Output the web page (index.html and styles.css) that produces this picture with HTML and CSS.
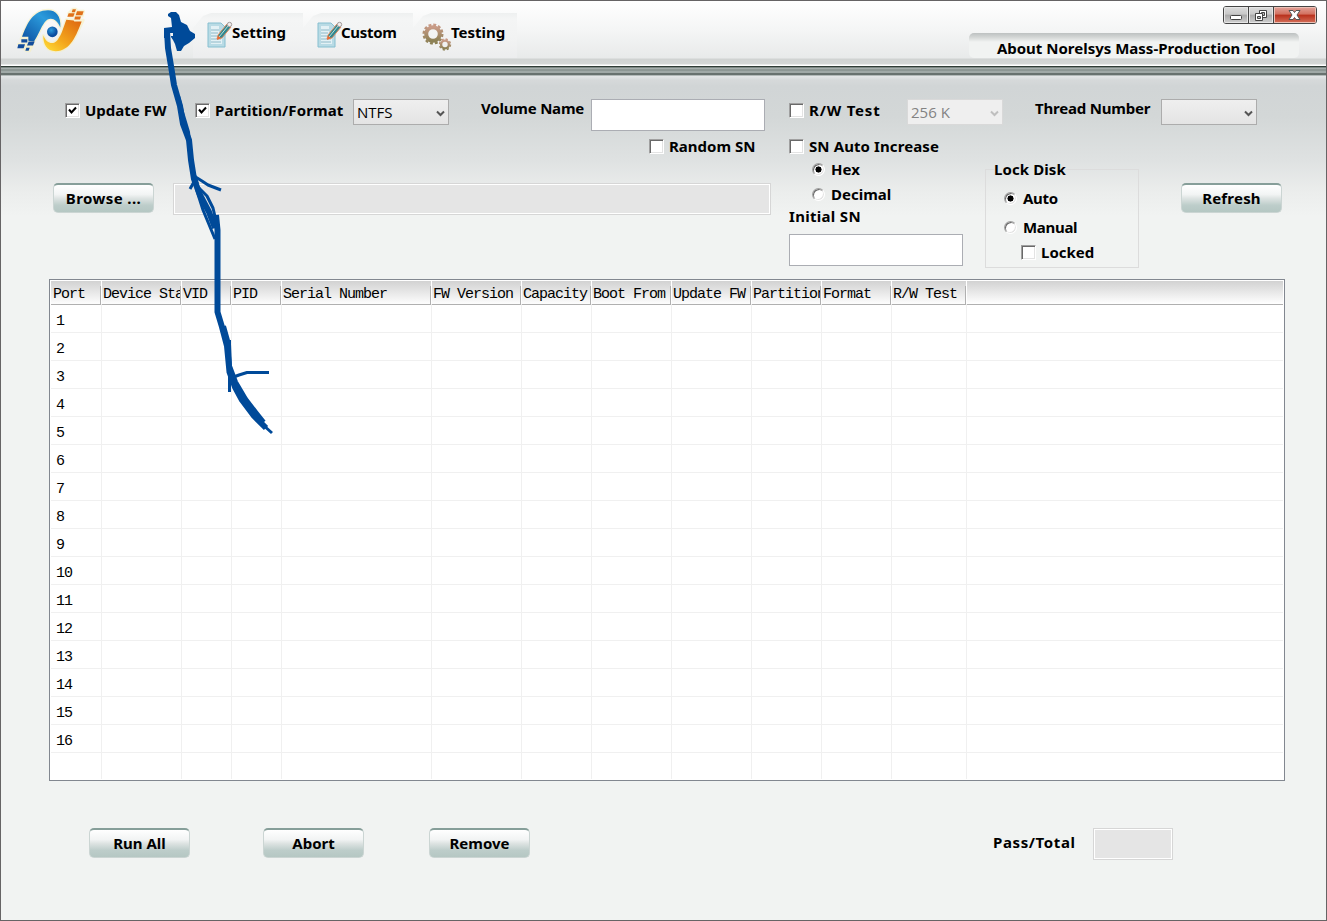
FILE: index.html
```html
<!DOCTYPE html>
<html lang="en">
<head>
  <meta charset="UTF-8" />
  <title>Norelsys Mass-Production Tool</title>
  <link rel="stylesheet" href="styles.css">
</head>
<body>
<div class="window">

  <!-- Header -->
  <div class="header">
    <svg class="logo" viewBox="38 18 240 152">
      <defs>
        <linearGradient id="blue" x1="0" y1="1" x2="1" y2="0">
          <stop offset="0" stop-color="#0c4fa0" /><stop offset="0.65" stop-color="#2b9bdc" /><stop offset="1" stop-color="#1473bd" />
        </linearGradient>
        <linearGradient id="orange" x1="0" y1="1" x2="1" y2="0">
          <stop offset="0" stop-color="#ffe03a" /><stop offset="0.4" stop-color="#f4a81c" /><stop offset="1" stop-color="#dd6410" />
        </linearGradient>
        <radialGradient id="ball" cx="0.4" cy="0.35">
          <stop offset="0" stop-color="#2b9bdc" /><stop offset="1" stop-color="#0c4fa0" />
        </radialGradient>
      </defs>
      <g stroke="#f8f0bd" stroke-width="8" stroke-linejoin="round" class="glow">
        <path d="M62 117C80 70 98 30 143 30C168 30 182 48 180 82C169 54 147 48 133 66C121 82 114 104 101 126L80 123L83 116Z" />
        <path d="M198 58L249 60C229 103 211 153 166 153C139 153 128 132 129 106C139 131 158 135 171 120C185 103 190 79 198 58Z" />
        <path d="M54 132h44l-10 20h-10zM205 39l12 -12h10l3 6h20l-4 15h-40z" />
      </g>
      <path fill="url(#blue)" d="M65 110C80 70 98 30 143 30C168 30 182 48 180 82C169 54 147 48 133 66C121 82 114 104 101 124L84 122V110Z" />
      <path fill="url(#orange)" d="M198 59L220 61L222 64L244 64C229 103 211 153 166 153C139 153 128 132 129 106C139 131 158 135 171 120C185 103 190 79 198 59Z" />
      <circle cx="156" cy="95" r="16" fill="url(#ball)" />
      <path fill="#134d9c" d="M63 117h18v10h-18zM85 124h18l-5 12h-18zM54 132h20l-4 12h-19zM78 143h10l-3 9h-10z" />
      <path fill="#e0711a" d="M217 27h10l-3 9h-10zM230 33h20l-4 12h-20zM205 39h18l-4 11h-18zM224 49h18l-3 9h-17z" />
    </svg>
    <div class="tabs">
      <div class="tab">
        <svg class="tab-icon" viewBox="0 0 26 28">
          <path d="M1 2H14L18 6V26H1Z" fill="#b9dbe5" stroke="#86bfd0" />
          <path d="M4 5H12V12H15V23H4Z" fill="#e3f1f5" />
          <path d="M4 9H12M4 12H11M4 15H10M4 18H14M4 21H14" stroke="#8eb9c8" />
          <path d="M10 18L11 14L20 3L24 6L15 17Z" fill="#31888f" stroke="#e08b60" />
          <path d="M12 16L21 5" stroke="#b9e0dc" />
          <path d="M10 19L11 15L14 17Z" fill="#f06a30" />
          <circle cx="22.5" cy="3.5" r="2.2" fill="#eee" stroke="#a39a9a" />
        </svg>
        <span>Setting</span>
      </div>
      <div class="tab">
        <svg class="tab-icon" viewBox="0 0 26 28">
          <path d="M1 2H14L18 6V26H1Z" fill="#b9dbe5" stroke="#86bfd0" />
          <path d="M4 5H12V12H15V23H4Z" fill="#e3f1f5" />
          <path d="M4 9H12M4 12H11M4 15H10M4 18H14M4 21H14" stroke="#8eb9c8" />
          <path d="M10 18L11 14L20 3L24 6L15 17Z" fill="#31888f" stroke="#e08b60" />
          <path d="M12 16L21 5" stroke="#b9e0dc" />
          <path d="M10 19L11 15L14 17Z" fill="#f06a30" />
          <circle cx="22.5" cy="3.5" r="2.2" fill="#eee" stroke="#a39a9a" />
        </svg>
        <span class="t-custom">Custom</span>
      </div>
      <div class="tab tab-testing">
        <svg class="tab-icon gear-icon" viewBox="0 0 30 28">
          <defs>
            <linearGradient id="gear" x1="0" y1="0" x2="0" y2="1">
              <stop offset="0" stop-color="#c99b87" /><stop offset="1" stop-color="#8c8155" />
            </linearGradient>
          </defs>
          <g fill="none" stroke="url(#gear)">
            <circle cx="11" cy="11" r="6.8" stroke-width="4" />
            <circle cx="11" cy="11" r="9.3" stroke-width="2.4" stroke-dasharray="2.9 1.97" />
            <circle cx="23" cy="21.5" r="3.9" stroke-width="2.4" />
            <circle cx="23" cy="21.5" r="5.4" stroke-width="1.6" stroke-dasharray="2.2 2.04" />
          </g>
        </svg>
        <span>Testing</span>
      </div>
    </div>
    <div class="header-right">
      <div class="win-buttons">
        <button class="win-btn"><svg viewBox="0 0 24 16"><rect x="6.500" y="8.500" width="11" height="4" rx="1" fill="#fff" stroke="#444" /></svg></button>
        <button class="win-btn"><svg viewBox="0 0 24 16">
          <path d="M10.500 3.500h7v7h-7z" fill="#fff" stroke="#444" />
          <path d="M12.500 5.500h3v3h-3z" fill="#bbb" stroke="#444" />
          <path d="M6.500 6.500h7v7h-7z" fill="#fff" stroke="#444" />
          <path d="M8.500 9.500h3v2h-3z" fill="#bbb" stroke="#444" />
        </svg></button>
        <button class="win-btn win-close"><svg viewBox="0 0 42 16">
          <path d="M15 3.500h4l1.500 2l1.500 -2h4l-3 4.500l3 4.500h-4l-1.500 -2l-1.500 2h-4l3 -4.500z" fill="#fff" stroke="#555" />
        </svg></button>
      </div>
      <div class="about">About Norelsys Mass-Production Tool</div>
    </div>
  </div>
  <div class="stripe"></div>

  <!-- Settings -->
  <div class="settings">
    <div class="settings-left">
      <div class="row-left">
        <label class="check"><input type="checkbox" checked><span>Update FW</span></label>
        <label class="check"><input type="checkbox" checked><span class="t-partition">Partition/Format</span></label>
        <div class="select">NTFS<svg viewBox="0 0 9 7"><path d="M1 1.500L4.500 5L8 1.500" /></svg></div>
        <span class="caption">Volume Name</span>
        <input type="text" class="text-box">
      </div>
      <label class="check random"><input type="checkbox"><span>Random SN</span></label>
      <div class="browse-row">
        <button class="btn t-browse">Browse ...</button>
        <div class="readonly path"></div>
      </div>
    </div>

    <div class="settings-right">
      <div class="row-right">
        <label class="check"><input type="checkbox"><span class="t-rw">R/W Test</span></label>
        <div class="select disabled">256 K<svg viewBox="0 0 9 7"><path d="M1 1.500L4.500 5L8 1.500" /></svg></div>
        <span class="caption">Thread Number</span>
        <div class="select"><svg viewBox="0 0 9 7"><path d="M1 1.500L4.500 5L8 1.500" /></svg></div>
      </div>
      <div class="sn-row">
        <div class="serial">
          <label class="check"><input type="checkbox"><span class="t-partition">SN Auto Increase</span></label>
          <label class="check radio hex"><input type="radio" name="base" checked><span>Hex</span></label>
          <label class="check radio decimal"><input type="radio" name="base"><span>Decimal</span></label>
          <div class="initial">Initial SN</div>
          <input type="text" class="text-box">
        </div>
        <fieldset class="lock">
          <legend>Lock Disk</legend>
          <label class="check"><input type="radio" name="lock" checked><span class="t-lock">Auto</span></label>
          <label class="check manual"><input type="radio" name="lock"><span class="t-lock">Manual</span></label>
          <label class="check locked"><input type="checkbox"><span>Locked</span></label>
        </fieldset>
        <button class="btn refresh">Refresh</button>
      </div>
    </div>
  </div>

  <!-- Ports -->
  <div class="list">
    <table>
      <colgroup>
        <col class="w51"><col class="w80"><col class="w50"><col class="w50"><col class="w150"><col class="w90">
        <col class="w70"><col class="w80"><col class="w80"><col class="w70"><col class="w70"><col class="w75"><col>
      </colgroup>
      <thead>
        <tr>
          <th>Port</th>
          <th>Device Status</th>
          <th>VID</th>
          <th>PID</th>
          <th>Serial Number</th>
          <th>FW Version</th>
          <th>Capacity</th>
          <th>Boot From</th>
          <th>Update FW</th>
          <th>Partition</th>
          <th>Format</th>
          <th>R/W Test</th>
          <th></th>
        </tr>
      </thead>
      <tbody id="portRows"></tbody>
    </table>
  </div>

  <!-- Actions -->
  <div class="footer">
    <button class="btn">Run All</button>
    <button class="btn abort">Abort</button>
    <button class="btn remove">Remove</button>
    <span class="pass">Pass/Total</span>
    <div class="readonly total"></div>
  </div>

  <!-- Pen marks -->
  <svg class="pen" viewBox="0 0 1327 921">
    <path class="fill" d="M168 14L171 12H176L179 15L181 22L187 25L190 31L195 34V38L189 43L184 46L181 51H177L175 44L173 40L171 37V36H173V33H168V38H164V28L172 27L171 18L168 16Z" />
    <path class="thick" d="M167 31L168 48L171 66L174 85L180 106L183 124L189 140L191 160L194 179L200 195L209 212L215 228" />
    <path class="thick" d="M216 215L217.500 230V260V312L222 327L227 346L229.500 372L235 387L242 400L254 416L266 428" />
    <path class="mid" d="M178 96L182 112L188 132L190 152L193 172L197 184M224 326L229 344L230 366L236 382L246 399L256 412L264 422" />
    <path d="M192 168L195 180L190 189M194 176L202 181L208 185L221 190M199 188L207 196L213 208L217 225M196 188L203 210L215 239M262 424L272 433M229.500 340V392M231 378L239 375L247 372.500H269" />
  </svg>
</div>

<script>
  const body = document.getElementById('portRows');
  for (let i = 1; i <= 17; i++) {
    const row = document.createElement('tr');
    row.innerHTML = `<td>${i <= 16 ? i : ''}</td>` + '<td></td>'.repeat(12);
    body.appendChild(row);
  }
</script>
</body>
</html>
```
FILE: styles.css
```css
* {
  box-sizing: border-box;
}
body {
  margin: 0;
  font-family: "Noto Sans", sans-serif;
  font-size: 15px;
  font-weight: 700;
  line-height: 20px;
  color: #000;
}
button, input {
  font: inherit;
  margin: 0;
}
.window {
  position: relative;
  width: 1327px;
  height: 921px;
  overflow: hidden;
  border: 1px solid #666465;
  background: #f1f3f2;
}

/* Header */
.header {
  display: flex;
  height: 65px;
  background: linear-gradient(#fff 0, #f4f5f5 30px, #e8eaea 57px, #d0d3d2 58px, #d3d6d5 63px, #fff 64px);
}
.logo {
  width: 80px;
  height: 51px;
  margin: 5px 0 0 12px;
}
.glow {
  fill: #f8f0bd;
  opacity: 0.6;
}
.tabs {
  display: flex;
  margin: 12px 0 0 100px;
  height: 45px;
}
.tab {
  display: flex;
  width: 110px;
  padding: 8px 0 0 14px;
  background: linear-gradient(#eef0f0, #f4f5f5 6px, #f2f3f3 25px, #ecedee);
  clip-path: polygon(0 15px, 10px 3px, 18px 0, 100% 0, 100% 100%, 0 100%);
}
.tab-icon {
  width: 26px;
  height: 28px;
  flex: none;
}
.tab span {
  margin: 1px 0 0 -1px;
}
.tab .t-custom {
  margin-left: -2px;
  letter-spacing: -0.3px;
}
.tab-testing {
  width: 104px;
  padding-left: 9px;
}
.gear-icon {
  width: 30px;
  margin-top: 2px;
}
.tab-testing span {
  margin-left: -1px;
}
.header-right {
  display: flex;
  flex-direction: column;
  align-items: flex-end;
  margin-left: auto;
  width: 350px;
}
.win-buttons {
  display: flex;
  width: 94px;
  height: 18px;
  margin: 5px 9px 0 0;
  border: 1px solid #444;
  border-radius: 3px;
  overflow: hidden;
}
.win-btn {
  flex: 0 0 25px;
  height: 16px;
  padding: 0;
  border: 0;
  border-right: 1px solid #444;
  background: linear-gradient(#dcdcdc, #c8c8c8 45%, #a9a9a9 50%, #cfcfcf);
  box-shadow: inset 0 0 0 1px #e6e6e6;
}
.win-btn svg {
  display: block;
  width: 100%;
  height: 16px;
}
.win-close {
  flex: 1;
  border-right: 0;
  background: linear-gradient(#e2a198, #d2705f 45%, #b8301c 50%, #d4705a);
  box-shadow: inset 0 0 0 1px #ecc0b5;
}
.about {
  width: 330px;
  height: 25px;
  margin: 9px 27px 0 0;
  padding: 5px 0 0 4px;
  border-radius: 5px;
  background: linear-gradient(#bdc1c1, #d2d5d4 4px, #f1f3f2 9px);
  text-align: center;
  white-space: nowrap;
}
.stripe {
  height: 10px;
  background: linear-gradient(#2f3c36 0 1px, #7d8884 1px 2px, #a5aeac 2px 3px, #8d9794 3px 5px, #a0a9a7 5px 7px, #68726f 7px 9px, #b3bab9 9px);
}

/* Settings */
.settings {
  display: flex;
  height: 203px;
  padding-top: 23px;
  background: linear-gradient(#e5e7e8, #d6d9da 4px, #d1d5d6 10px, #d3d7d7 40px, #dfe2e2 85px, #ebedec 115px, #f1f3f2 140px);
}
.settings-left {
  width: 788px;
}
.row-left {
  display: grid;
  grid-template-columns: 130px 158px 128px 110px 174px;
  align-items: start;
  height: 32px;
  margin-left: 64px;
}
.check {
  display: flex;
  align-items: center;
  height: 20px;
  white-space: nowrap;
}
.row-left .check, .row-right .check {
  margin-top: 1px;
}
.check input {
  appearance: none;
  flex: none;
  width: 15px;
  height: 15px;
  margin-right: 5px;
  border: 1px solid;
  border-color: #a0a0a0 #fff #fff #a0a0a0;
  background: #fff no-repeat center;
  box-shadow: inset 1px 1px #696969, inset -1px -1px #e3e3e3;
}
.check input[type="checkbox"]:checked {
  background-image: url("data:image/svg+xml,%3Csvg xmlns='http://www.w3.org/2000/svg' width='9' height='9'%3E%3Cpath d='M1 3.500L3.500 6.500L8 1.500' fill='none' stroke='black' stroke-width='2'/%3E%3C/svg%3E");
}
.check input[type="radio"] {
  width: 13px;
  height: 13px;
  margin-right: 6px;
  border-radius: 50%;
}
.check input[type="radio"]:checked {
  background-image: radial-gradient(#000 2.800px, transparent 3.300px);
}
.t-partition {
  letter-spacing: 0.1px;
}
.t-rw {
  letter-spacing: 0.8px;
}
.t-lock {
  letter-spacing: -0.3px;
}
.t-browse {
  letter-spacing: 0.4px;
}
.caption {
  margin-top: -1px;
  letter-spacing: -0.2px;
  white-space: nowrap;
}
.select {
  display: flex;
  align-items: center;
  justify-content: space-between;
  width: 96px;
  height: 26px;
  padding: 0 3px;
  border: 1px solid #acacac;
  background: linear-gradient(#efefef, #e4e4e4);
  font-family: "Open Sans", sans-serif;
  font-weight: 400;
}
.select svg {
  width: 9px;
  height: 7px;
  margin: 2px 0 0 auto;
  fill: none;
  stroke: #555;
  stroke-width: 2;
}
.disabled {
  border-color: #d9d9d9;
  background: #efefef;
  color: #838383;
}
.disabled svg {
  stroke: #bfbfbf;
}
.text-box {
  display: block;
  width: 174px;
  height: 32px;
  border: 1px solid #abadb3;
  background: #fff;
}
.random {
  margin: 5px 0 0 648px;
}
.browse-row {
  display: flex;
  gap: 19px;
  margin: 27px 0 0 52px;
}
.btn {
  width: 101px;
  height: 30px;
  padding: 0;
  border: 1px solid #cbd5d3;
  border-top: 2px solid #869e99;
  border-radius: 5px;
  background: linear-gradient(#fff, #f2f4f4 35%, #dde3e2 50%, #bdcdca 75%, #b5c7c3);
  line-height: 24px;
  padding-bottom: 2px;
}
.readonly {
  height: 32px;
  border: 1px solid #d6d6d6;
  background: #e5e5e5;
  box-shadow: inset 0 0 0 1px #fff;
}
.path {
  width: 598px;
}
.row-right {
  display: grid;
  grid-template-columns: 118px 128px 126px 96px;
  align-items: start;
  height: 37px;
}
.sn-row {
  display: flex;
  align-items: flex-start;
}
.serial {
  width: 196px;
}
.radio {
  margin-left: 23px;
}
.hex {
  margin-top: 3px;
}
.decimal {
  margin-top: 5px;
}
.initial {
  margin: 2px 0 8px;
  letter-spacing: 0.3px;
}
.lock {
  width: 154px;
  height: 109px;
  margin: 23px 42px 0 0;
  padding: 9px 0 0 18px;
  border: 1px solid #dcdcdc;
}
.lock legend {
  padding: 0;
  margin-left: -10px;
  letter-spacing: 0.1px;
}
.manual {
  margin-top: 9px;
}
.locked {
  margin: 5px 0 0 17px;
}
.refresh {
  margin-top: 47px;
  letter-spacing: 0.2px;
}

/* Port list */
.list {
  width: 1236px;
  height: 502px;
  margin-left: 48px;
  padding: 1px;
  border: 1px solid #828790;
  background: #fff;
  overflow: hidden;
}
table {
  width: 100%;
  table-layout: fixed;
  border-collapse: separate;
  border-spacing: 0;
  font-family: "Liberation Mono", monospace;
  font-size: 15px;
  font-weight: 400;
  letter-spacing: -1px;
}
.w50 { width: 50px; }
.w51 { width: 51px; }
.w70 { width: 70px; }
.w75 { width: 75px; }
.w80 { width: 80px; }
.w90 { width: 90px; }
.w150 { width: 150px; }
th {
  height: 24px;
  padding: 3px 0 0 1px;
  border-right: 2px solid transparent;
  border-bottom: 1px solid #b0b0b0;
  background:
    linear-gradient(#fff, #fff) no-repeat right top / 1px 100%,
    linear-gradient(#b0b0b0, #b0b0b0) no-repeat right 1px bottom / 1px 19px,
    linear-gradient(#d2d2d2, #fff);
  background-origin: border-box;
  font-weight: 400;
  line-height: 19px;
  text-align: left;
  white-space: nowrap;
  overflow: hidden;
}
th:first-child {
  padding-left: 2px;
}
th:last-child {
  border-right: 0;
  background: linear-gradient(#d2d2d2, #fff);
}
td {
  height: 28px;
  padding: 6px 0 0 5px;
  border-right: 1px solid #f0f0f0;
  border-bottom: 1px solid #f0f0f0;
}
td:last-child {
  border-right: 0;
}
tr:last-child td {
  height: 26px;
  border-bottom: 0;
}

/* Footer */
.footer {
  display: flex;
  padding: 47px 0 0 88px;
}
.abort {
  margin-left: 73px;
}
.remove {
  margin-left: 65px;
}
.pass {
  width: 100px;
  margin: 4px 0 0 463px;
  letter-spacing: 0.6px;
}
.total {
  width: 80px;
}

/* Pen marks over the window */
.pen {
  position: absolute;
  top: -1px;
  left: -1px;
  width: 1327px;
  height: 921px;
  fill: none;
  stroke: #004a99;
  stroke-width: 3;
  stroke-linejoin: round;
  pointer-events: none;
}
.pen .thick {
  stroke-width: 6;
}
.pen .mid {
  stroke-width: 4;
}
.pen .fill {
  fill: #004a99;
  fill-rule: evenodd;
  stroke: none;
}
```
